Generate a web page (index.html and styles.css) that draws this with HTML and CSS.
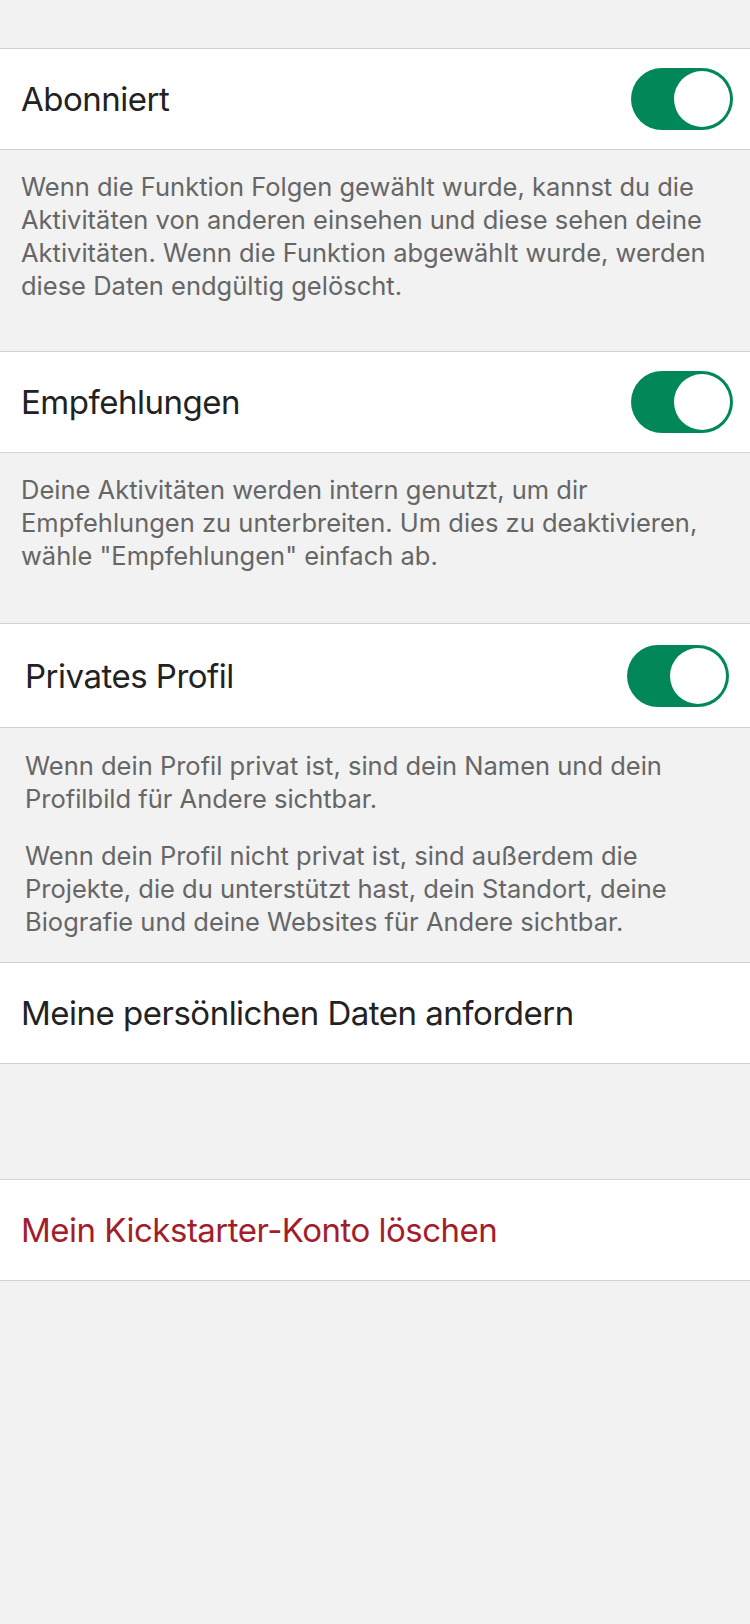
FILE: index.html
```html
<!DOCTYPE html>
<html lang="de">
<head>
<meta charset="utf-8">
<title>Datenschutz</title>
<link rel="stylesheet" href="styles.css">
</head>
<body>
<main class="page">
  <section class="cell">
    <span class="label">Abonniert</span>
    <span class="toggle on"><span class="knob"></span></span>
  </section>
  <div class="footer f1">
    <p>Wenn die Funktion Folgen gewählt wurde, kannst du die<br>Aktivitäten von anderen einsehen und diese sehen deine<br>Aktivitäten. Wenn die Funktion abgewählt wurde, werden<br>diese Daten endgültig gelöscht.</p>
  </div>
  <section class="cell">
    <span class="label">Empfehlungen</span>
    <span class="toggle on"><span class="knob"></span></span>
  </section>
  <div class="footer f2">
    <p>Deine Aktivitäten werden intern genutzt, um dir<br>Empfehlungen zu unterbreiten. Um dies zu deaktivieren,<br>wähle "Empfehlungen" einfach ab.</p>
  </div>
  <section class="cell cell-alt">
    <span class="label">Privates Profil</span>
    <span class="toggle on"><span class="knob"></span></span>
  </section>
  <div class="footer f3">
    <p>Wenn dein Profil privat ist, sind dein Namen und dein<br>Profilbild für Andere sichtbar.</p>
    <p>Wenn dein Profil nicht privat ist, sind außerdem die<br>Projekte, die du unterstützt hast, dein Standort, deine<br>Biografie und deine Websites für Andere sichtbar.</p>
  </div>
  <section class="cell">
    <span class="label">Meine persönlichen Daten anfordern</span>
  </section>
  <div class="spacer"></div>
  <section class="cell">
    <span class="label danger">Mein Kickstarter-Konto löschen</span>
  </section>
</main>
</body>
</html>
```

FILE: styles.css
```css
html, body {
  margin: 0;
  padding: 0;
  background: #f2f2f2;
}
body {
  font-family: Inter, "Noto Sans", "Liberation Sans", sans-serif;
  -webkit-font-smoothing: antialiased;
}
.page {
  padding-top: 48px;
  min-height: 1624px;
  box-sizing: border-box;
}
.cell {
  background: #ffffff;
  border-top: 1px solid #d3d3d3;
  border-bottom: 1px solid #d3d3d3;
  height: 100px;
  display: flex;
  align-items: center;
  justify-content: space-between;
  padding: 0 17px 0 21px;
}
.cell-alt {
  height: 103px;
  padding: 0 21px 0 25px;
}
.label {
  font-size: 33px;
  letter-spacing: -0.5px;
  color: #222222;
}
.danger {
  color: #a41d2b;
}
.toggle {
  width: 102px;
  height: 62px;
  border-radius: 31px;
  background: #028858;
  display: flex;
  align-items: center;
  justify-content: flex-end;
  padding: 0 3px;
  box-sizing: border-box;
}
.knob {
  width: 56px;
  height: 56px;
  border-radius: 50%;
  background: #ffffff;
}
.footer {
  padding: 20px 21px 49px 21px;
  color: #666666;
  font-size: 25.5px;
  line-height: 33px;
  letter-spacing: 0;
}
.footer p {
  margin: 0;
}
.f2 {
  padding-bottom: 51px;
}
.f3 {
  padding: 21px 25px 24px 25px;
}
.f3 p + p {
  margin-top: 24px;
}
.spacer {
  height: 115px;
}
```
